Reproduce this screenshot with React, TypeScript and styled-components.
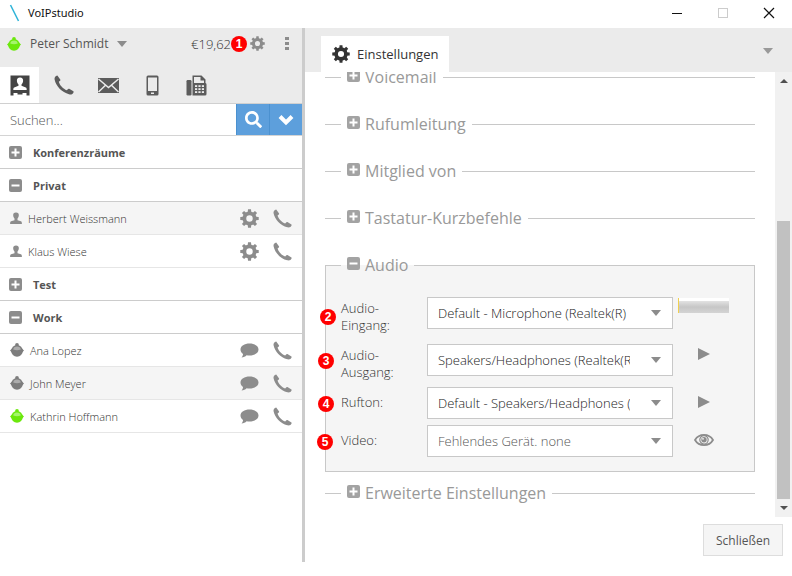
import React from "react";
import styled, { createGlobalStyle, css } from "styled-components";
import { FaSearch } from "react-icons/fa";

const GlobalStyle = createGlobalStyle`
  *, *::before, *::after { box-sizing: border-box; }
  body {
    margin: 0;
    background: #fff;
    color: #555;
    font-family: "Open Sans", "Noto Sans", sans-serif;
    font-size: 13px;
  }
  button, input, select { font: inherit; color: inherit; }
  svg { display: block; flex: none; }
`;

/* ---------- icons ---------- */

type IconProps = { size?: number };

const Gear = ({ size = 18 }: IconProps) => (
  <svg width={size} height={size} viewBox="0 0 20 20" aria-hidden="true">
    <circle cx="10" cy="10" r="5.4" fill="none" stroke="currentColor" strokeWidth="4" />
    {[0, 45, 90, 135, 180, 225, 270, 315].map((a) => (
      <path key={a} d="M8.1 4 L8.4 0.3 H11.6 L11.9 4Z" fill="currentColor" transform={`rotate(${a} 10 10)`} />
    ))}
  </svg>
);

const Phone = ({ size = 18 }: IconProps) => (
  <svg width={size} height={size} viewBox="0 0 20 20" aria-hidden="true">
    <path
      fill="currentColor"
      d="M3.4 0.6 L6.4 4.8 Q6.6 5.4 6.1 5.8 L4.8 6.8 C5.8 10.4 9.2 13.9 12.8 15.3 L14.1 14 Q14.6 13.5 15.2 13.8 L19.4 16.2 Q19.8 16.6 19.6 17.2 C18.8 19.2 17.2 19.8 15 19.3 C8 17.6 1.8 11.2 0.6 4.6 C0.3 2.6 1.2 1.2 3.4 0.6Z"
    />
  </svg>
);

const Contacts = () => (
  <svg width="20" height="21" viewBox="0 0 20 21" aria-hidden="true">
    <path fill="currentColor" d="M0.5 0.5h19v20h-3v-2.5h-4v1.5h-5V18h-4v2.5h-3z" />
    <path
      fill="#fff"
      d="M10 2.6c2.2 0 3.3 1.5 3.1 3.5-.1 1.5-.8 2.5-1.6 3.3v1.4l4.3 1.6c.7.3.9.9.9 2.6H3.3c0-1.7.2-2.3.9-2.6l4.3-1.6V9.4c-.8-.8-1.5-1.8-1.6-3.3C6.7 4.1 7.8 2.6 10 2.6z"
    />
  </svg>
);

const Mail = () => (
  <svg width="21" height="15" viewBox="0 0 21 15" aria-hidden="true">
    <rect width="21" height="15" fill="currentColor" />
    <path d="M0.5 1 L10.5 9.5 L20.5 1 M0.5 14 L7.5 7.3 M20.5 14 L13.5 7.3" fill="none" stroke="#ebebeb" strokeWidth="1.5" />
  </svg>
);

const Mobile = () => (
  <svg width="13" height="21" viewBox="0 0 13 21" aria-hidden="true">
    <path
      fill="currentColor"
      fillRule="evenodd"
      d="M2 0.5h9a1.5 1.5 0 0 1 1.5 1.5v17a1.5 1.5 0 0 1-1.5 1.5H2A1.5 1.5 0 0 1 .5 19V2A1.5 1.5 0 0 1 2 .5zM2 2.5v13.5h9V2.5zM5 17.5v1.5h3v-1.5z"
    />
  </svg>
);

const Fax = () => (
  <svg width="21" height="21" viewBox="0 0 21 21" aria-hidden="true">
    <rect x="0.5" y="5" width="5" height="15.5" rx="1.2" fill="currentColor" />
    <path
      fill="currentColor"
      fillRule="evenodd"
      d="M6.5 0.5h9l4 4V8q1 .3 1 1.5v9.5q0 1.500-1.500 1.500H6.500zM8 2v6h10V5.500h-3.500V2z"
    />
    <g fill="#ebebeb">
      {[10.2, 13.2, 16.2].map((y) => [9, 12.4, 15.8].map((x) => <rect key={`${x}-${y}`} x={x} y={y} width="2.2" height="1.8" />))}
    </g>
  </svg>
);

const Person = () => (
  <svg width="12" height="13" viewBox="0 0 12 13" aria-hidden="true">
    <path
      fill="currentColor"
      d="M6 0.5c2.1 0 3 1.3 2.8 3C8.7 4.8 8.1 5.9 7.5 6.6v1.6l3.4 1.1c.7.3 1 .8 1 2.7H.1c0-1.9.3-2.4 1-2.7l3.4-1.1V6.6C3.900 5.900 3.300 4.800 3.200 3.500 3 1.800 3.900.5 6 .5z"
    />
  </svg>
);

const Bubble = () => (
  <svg width="19" height="15" viewBox="0 0 19 15" aria-hidden="true">
    <path fill="currentColor" d="M9.5 0.5c5 0 9 2.5 9 6s-4 6-9 6c-1 0-2-.1-2.9-.3C5.3 13.5 3.6 14.3 1.5 14.5 2.5 13.5 3 12.3 3 11 1.4 9.9.5 8.3.5 6.5c0-3.5 4-6 9-6z" />
  </svg>
);

const Status = ({ online }: { online?: boolean }) => {
  const base = online ? "#6be80c" : "#7d7d7d";
  const light = online ? "#a4f56c" : "#adadad";
  return (
    <svg width="14" height="14" viewBox="0 0 14 14" aria-hidden="true">
      <circle cx="7" cy="1.900" r="1.900" fill={base} />
      <circle cx="7" cy="7.900" r="5.800" fill={base} />
      <path d="M0 7.600L3 4.800V10.400zM14 7.600L11 4.800V10.400z" fill={base} />
      <path d="M3.200 6.600Q3.600 3.600 7 3.600T10.800 6.600Q7 8 3.200 6.600Z" fill={light} />
    </svg>
  );
};

const Toggle = ({ open }: { open?: boolean }) => (
  <svg width="13" height="13" viewBox="0 0 13 13" aria-hidden="true">
    <rect width="13" height="13" rx="2" fill="currentColor" />
    <path d={open ? "M2.5 6.5h8" : "M2.5 6.5h8M6.5 2.5v8"} stroke="#fff" strokeWidth="2" />
  </svg>
);

const Caret = () => (
  <svg width="10" height="6" viewBox="0 0 10 6" aria-hidden="true">
    <path d="M0 0h10L5 6z" fill="currentColor" />
  </svg>
);

const Chevron = () => (
  <svg width="16" height="12" viewBox="0 0 16 12" aria-hidden="true">
    <path d="M2 2.5L8 8.5L14 2.5" fill="none" stroke="currentColor" strokeWidth="4" />
  </svg>
);

const Play = () => (
  <svg width="12" height="12" viewBox="0 0 12 12" aria-hidden="true">
    <path d="M0 0L12 6L0 12z" fill="currentColor" />
  </svg>
);

const Eye = () => (
  <svg width="20" height="12" viewBox="0 0 20 12" aria-hidden="true">
    <path d="M1 6C5-.8 15-.8 19 6 15 12.8 5 12.8 1 6z" fill="none" stroke="currentColor" strokeWidth="1.8" />
    <circle cx="10" cy="5.8" r="4.2" fill="none" stroke="currentColor" strokeWidth="1.2" />
    <circle cx="10" cy="5.8" r="2.7" fill="currentColor" />
    <circle cx="9" cy="4.8" r="0.9" fill="#f5f5f5" />
  </svg>
);

const ArrowGlyph = () => (
  <svg width="8" height="4" viewBox="0 0 8 4" aria-hidden="true">
    <path d="M0 0h8L4 4z" fill="currentColor" />
  </svg>
);

/* ---------- window ---------- */

const Window = styled.div`
  display: flex;
  flex-direction: column;
  height: 100vh;
  padding-bottom: 14px;
`;

const TitleBar = styled.header`
  display: flex;
  align-items: center;
  height: 28px;
  padding: 0 17px 3px 9px;
  color: #111;
  font-family: "Noto Sans", sans-serif;
  font-size: 11px;
`;

const Title = styled.h1`
  flex: 1;
  margin: 0 0 0 8px;
  font: inherit;
`;

const WindowButtons = styled.div`
  display: flex;
  gap: 34px;
`;

const PlainButton = styled.button`
  display: inline-flex;
  align-items: center;
  justify-content: center;
  padding: 0;
  border: 0;
  background: none;
  cursor: pointer;
`;

const Body = styled.div`
  flex: 1;
  display: grid;
  grid-template-columns: 305px minmax(0, 1fr);
  min-height: 0;
`;

/* ---------- sidebar ---------- */

const Sidebar = styled.aside`
  border-right: 3px solid #ccc;
`;

const SidebarHead = styled.div`
  background: #ebebeb;
  border-bottom: 1px solid #d0d0d0;
`;

const UserBar = styled.div`
  display: flex;
  align-items: center;
  height: 39px;
  padding: 0 9px 8px 7px;
  font-size: 12px;
  color: #8c8c8c;
`;

const UserButton = styled(PlainButton)`
  gap: 9px;
  margin-right: auto;
`;

const UserText = styled.span`
  color: #555;
`;

const Balance = styled.span`
  color: #333;
  font-size: 13px;
  font-weight: 300;
`;

const SettingsButton = styled(PlainButton)`
  position: relative;
  width: 34px;
  padding-left: 18px;
`;

const Badge = styled.span<{ $left: number; $top: number }>`
  position: absolute;
  left: ${(p) => p.$left}px;
  top: ${(p) => p.$top}px;
  width: 16px;
  height: 16px;
  border-radius: 50%;
  background: #f00;
  color: #fff;
  font: bold 12px/16px "Liberation Sans", Arial, sans-serif;
  text-align: center;
`;

const MoreButton = styled(PlainButton)`
  width: 12px;
  margin-left: 16px;
`;

const Tabs = styled.nav`
  display: flex;
  height: 36px;
`;

const IconTab = styled(PlainButton)<{ $active?: boolean }>`
  width: ${(p) => (p.$active ? 39 : 44)}px;
  color: ${(p) => (p.$active ? "#444" : "#5c5c5c")};
  ${(p) =>
    p.$active &&
    css`
      margin-right: 3px;
      background: #fff;
    `}
`;

const Search = styled.form`
  display: flex;
  height: 31px;
`;

const SearchInput = styled.input`
  flex: 1;
  min-width: 0;
  padding: 0 10px;
  border: 0;
  outline: 0;
  font-size: 13px;
  font-weight: 300;
  &::placeholder { color: #555; opacity: 1; }
`;

const SearchButton = styled(PlainButton)`
  width: 33px;
  background: #5d9fdc;
  color: #fff;
  border-left: 1px solid #4b91d0;
`;

const Groups = styled.div`
  border-top: 1px solid #d4d4d4;
`;

const GroupHead = styled.h2`
  margin: 0;
  border-bottom: 1px solid #ccc;
  font-size: 11px;
  font-weight: 700;
`;

const GroupButton = styled(PlainButton)`
  justify-content: flex-start;
  gap: 11px;
  width: 100%;
  height: 32px;
  padding-left: 9px;
  color: #8c8c8c;
`;

const GroupName = styled.span`
  color: #555;
`;

const ContactList = styled.ul`
  margin: 0;
  padding: 0;
  list-style: none;
`;

const Contact = styled.li<{ $shaded?: boolean }>`
  display: flex;
  align-items: center;
  gap: 14px;
  height: 33px;
  padding: 0 10px;
  border-bottom: 1px solid #e6e6e6;
  background: ${(p) => (p.$shaded ? "#f5f5f5" : "#fff")};
  color: #8c8c8c;
`;

const ContactLabel = styled.span`
  display: flex;
  align-items: center;
  gap: 6px;
  flex: 1;
`;

const ContactName = styled.span`
  color: #333;
  font-size: 11px;
  font-weight: 300;
`;

/* ---------- settings panel ---------- */

const Panel = styled.main`
  display: flex;
  flex-direction: column;
  min-height: 0;
`;

const TabBar = styled.div`
  display: flex;
  align-items: flex-end;
  justify-content: space-between;
  height: 44px;
  padding: 0 19px 0 16px;
  background: #ebebeb;
  color: #999;
`;

const PanelTab = styled(PlainButton)`
  gap: 7px;
  height: 36px;
  padding: 0 11px;
  background: #fff;
  color: #333;
  font-size: 13px;
`;

const TabMenu = styled(PlainButton)`
  height: 42px;
`;

const ScrollArea = styled.div`
  flex: 1;
  display: flex;
  min-height: 0;
`;

const Content = styled.div`
  flex: 1;
  min-width: 0;
  overflow: hidden;
  padding: 0 20px;
`;

const Sections = styled.div`
  display: flex;
  flex-direction: column;
  gap: 23px;
  margin-top: -7px;
`;

const Fieldset = styled.fieldset<{ $open?: boolean }>`
  min-width: 0;
  margin: 0;
  padding: 0;
  border: 1px solid #c8c8c8;
  ${(p) =>
    p.$open
      ? css`
          margin-bottom: -14px;
          padding: 20px 15px 14px;
          background: #f5f5f5;
        `
      : css`
          border-width: 1px 0 0;
        `}
`;

const Legend = styled.legend<{ $open?: boolean }>`
  margin-left: ${(p) => (p.$open ? 0 : 16)}px;
  padding: 0 6px;
  color: #999;
  font-size: 16px;
  line-height: 24px;
`;

const LegendButton = styled(PlainButton)`
  display: flex;
  gap: 5px;
  height: 24px;
  svg { margin-bottom: 4px; color: #a3a3a3; }
`;

const Fields = styled.div`
  display: flex;
  flex-direction: column;
  gap: 6px;
`;

const Field = styled.div<{ $roomy?: boolean }>`
  position: relative;
  display: grid;
  grid-template-columns: 86px minmax(0, 246px) 61px;
  align-items: start;
  ${(p) => p.$roomy && css`min-height: 41px;`}
`;

const FieldLabel = styled.label<{ $single?: boolean }>`
  width: 60px;
  padding-top: ${(p) => (p.$single ? 7 : 3)}px;
  color: #333;
  font-size: 13px;
  font-weight: 300;
  line-height: 17px;
`;

const SelectBox = styled.div`
  display: grid;
  align-items: center;
  color: #8c8c8c;
  > * { grid-area: 1 / 1; }
  > svg { justify-self: end; margin-right: 12px; pointer-events: none; }
`;

const Select = styled.select<{ $muted?: boolean }>`
  appearance: none;
  width: 100%;
  height: 32px;
  padding: 0 42px 0 10px;
  border: 1px solid #c8c8c8;
  border-radius: 0;
  background: #fff;
  color: ${(p) => (p.$muted ? "#555" : "#222")};
  font-size: 13px;
  font-weight: 300;
`;

const Meter = styled.div`
  width: 51px;
  height: 15px;
  margin: 1px 0 0 5px;
  border-left: 1px solid #f0d050;
  background: linear-gradient(#fff 0 3px, #e2e2e2 3px, #c6c6c6 9px, #d4d4d4);
`;

const FieldAction = styled(PlainButton)<{ $tall?: boolean }>`
  width: 61px;
  height: ${(p) => (p.$tall ? 30 : 20)}px;
  color: #8c8c8c;
`;

const ScrollBar = styled.div`
  display: flex;
  flex-direction: column;
  align-items: center;
  width: 17px;
  background: #f1f1f1;
  color: #505050;
`;

const ScrollArrow = styled(PlainButton)<{ $up?: boolean }>`
  width: 17px;
  height: 18px;
  ${(p) => p.$up && css`svg { transform: rotate(180deg); }`}
`;

const Track = styled.div`
  flex: 1;
  display: flex;
  flex-direction: column;
  justify-content: flex-end;
`;

const Thumb = styled.div`
  width: 13px;
  height: 68%;
  background: #c1c1c1;
`;

const Footer = styled.footer`
  display: flex;
  justify-content: flex-end;
  padding: 7px 9px 6px;
`;

const CloseButton = styled.button`
  height: 32px;
  padding: 0 12px;
  border: 1px solid #ddd;
  background: #f5f5f5;
  font-size: 12px;
  cursor: pointer;
`;

/* ---------- parts ---------- */

const Group = ({ name, open, children }: { name: string; open?: boolean; children?: React.ReactNode }) => (
  <section>
    <GroupHead>
      <GroupButton type="button" aria-expanded={!!open}>
        <Toggle open={open} />
        <GroupName>{name}</GroupName>
      </GroupButton>
    </GroupHead>
    {open && <ContactList>{children}</ContactList>}
  </section>
);

type ContactRowProps = { name: string; kind: "person" | "offline" | "online"; shaded?: boolean };

const ContactRow = ({ name, kind, shaded }: ContactRowProps) => (
  <Contact $shaded={shaded}>
    <ContactLabel>
      {kind === "person" ? <Person /> : <Status online={kind === "online"} />}
      <ContactName>{name}</ContactName>
    </ContactLabel>
    <PlainButton type="button" aria-label={kind === "person" ? "Bearbeiten" : "Chat"}>
      {kind === "person" ? <Gear size={19} /> : <Bubble />}
    </PlainButton>
    <PlainButton type="button" aria-label="Anrufen">
      <Phone size={19} />
    </PlainButton>
  </Contact>
);

const Section = ({ title, open, children }: { title: string; open?: boolean; children?: React.ReactNode }) => (
  <Fieldset $open={open}>
    <Legend $open={open}>
      <LegendButton type="button" aria-expanded={!!open}>
        <Toggle open={open} />
        {title}
      </LegendButton>
    </Legend>
    {children}
  </Fieldset>
);

type DeviceFieldProps = {
  id: string;
  label: string;
  value: string;
  badge: number;
  badgeLeft: number;
  badgeTop: number;
  single?: boolean;
  muted?: boolean;
  roomy?: boolean;
  children: React.ReactNode;
};

const DeviceField = ({ id, label, value, badge, badgeLeft, badgeTop, single, muted, roomy, children }: DeviceFieldProps) => (
  <Field $roomy={roomy}>
    <Badge $left={badgeLeft} $top={badgeTop}>{badge}</Badge>
    <FieldLabel htmlFor={id} $single={single}>{label}</FieldLabel>
    <SelectBox>
      <Select id={id} $muted={muted}>
        <option>{value}</option>
      </Select>
      <Caret />
    </SelectBox>
    {children}
  </Field>
);

export default function App() {
  return (
    <>
      <GlobalStyle />
      <Window>
        <TitleBar>
          <svg width="11" height="18" viewBox="0 0 11 18" aria-hidden="true">
            <path d="M1.5 1L9.5 17" stroke="#2fb4d8" strokeWidth="1.6" />
          </svg>
          <Title>VoIPstudio</Title>
          <WindowButtons>
            <PlainButton type="button" aria-label="Minimieren">
              <svg width="12" height="12" viewBox="0 0 12 12"><path d="M1 6.5h10" stroke="#111" /></svg>
            </PlainButton>
            <PlainButton type="button" aria-label="Maximieren">
              <svg width="12" height="12" viewBox="0 0 12 12"><rect x="1.5" y="1.5" width="9" height="9" fill="none" stroke="#ccc" /></svg>
            </PlainButton>
            <PlainButton type="button" aria-label="Fenster schließen">
              <svg width="12" height="12" viewBox="0 0 12 12"><path d="M1 1l10 10M11 1L1 11" stroke="#111" strokeWidth="1.2" /></svg>
            </PlainButton>
          </WindowButtons>
        </TitleBar>

        <Body>
          <Sidebar>
            <SidebarHead>
              <UserBar>
                <UserButton type="button">
                  <Status online />
                  <UserText>Peter Schmidt</UserText>
                  <Caret />
                </UserButton>
                <Balance>€19,62</Balance>
                <SettingsButton type="button" aria-label="Einstellungen">
                  <Badge $left={0} $top={0}>1</Badge>
                  <Gear size={15} />
                </SettingsButton>
                <MoreButton type="button" aria-label="Mehr">
                  <svg width="4" height="13" viewBox="0 0 4 13">
                    <path d="M0 0h4v3H0zM0 5h4v3H0zM0 10h4v3H0z" fill="currentColor" />
                  </svg>
                </MoreButton>
              </UserBar>
              <Tabs>
                <IconTab type="button" $active aria-label="Kontakte"><Contacts /></IconTab>
                <IconTab type="button" aria-label="Anrufe"><Phone size={20} /></IconTab>
                <IconTab type="button" aria-label="Nachrichten"><Mail /></IconTab>
                <IconTab type="button" aria-label="SMS"><Mobile /></IconTab>
                <IconTab type="button" aria-label="Fax"><Fax /></IconTab>
              </Tabs>
            </SidebarHead>
            <Search>
              <SearchInput type="text" placeholder="Suchen..." aria-label="Suchen" />
              <SearchButton type="submit" aria-label="Suche starten"><FaSearch size={17} /></SearchButton>
              <SearchButton type="button" aria-label="Optionen"><Chevron /></SearchButton>
            </Search>
            <Groups>
              <Group name="Konferenzräume" />
              <Group name="Privat" open>
                <ContactRow name="Herbert Weissmann" kind="person" shaded />
                <ContactRow name="Klaus Wiese" kind="person" />
              </Group>
              <Group name="Test" />
              <Group name="Work" open>
                <ContactRow name="Ana Lopez" kind="offline" />
                <ContactRow name="John Meyer" kind="offline" shaded />
                <ContactRow name="Kathrin Hoffmann" kind="online" />
              </Group>
            </Groups>
          </Sidebar>

          <Panel>
            <TabBar>
              <PanelTab type="button">
                <Gear size={18} />
                Einstellungen
              </PanelTab>
              <TabMenu type="button" aria-label="Tabs"><Caret /></TabMenu>
            </TabBar>
            <ScrollArea>
              <Content>
                <Sections>
                  <Section title="Voicemail" />
                  <Section title="Rufumleitung" />
                  <Section title="Mitglied von" />
                  <Section title="Tastatur-Kurzbefehle" />
                  <Section title="Audio" open>
                    <Fields>
                      <DeviceField id="mic" label="Audio-Eingang:" value="Default - Microphone (Realtek(R)" badge={2} badgeLeft={-21} badgeTop={12} roomy>
                        <Meter />
                      </DeviceField>
                      <DeviceField id="out" label="Audio-Ausgang:" value="Speakers/Headphones (Realtek(R) Audio)" badge={3} badgeLeft={-23} badgeTop={9}>
                        <FieldAction type="button" aria-label="Ausgang testen"><Play /></FieldAction>
                      </DeviceField>
                      <DeviceField id="ring" label="Rufton:" value="Default - Speakers/Headphones (Realtek(R) Audio)" badge={4} badgeLeft={-23} badgeTop={9} single>
                        <FieldAction type="button" aria-label="Rufton testen" $tall><Play /></FieldAction>
                      </DeviceField>
                      <DeviceField id="video" label="Video:" value="Fehlendes Gerät. none" badge={5} badgeLeft={-24} badgeTop={9} single muted>
                        <FieldAction type="button" aria-label="Video testen" $tall><Eye /></FieldAction>
                      </DeviceField>
                    </Fields>
                  </Section>
                  <Section title="Erweiterte Einstellungen" />
                </Sections>
              </Content>
              <ScrollBar>
                <ScrollArrow type="button" aria-label="Nach oben" $up><ArrowGlyph /></ScrollArrow>
                <Track><Thumb /></Track>
                <ScrollArrow type="button" aria-label="Nach unten"><ArrowGlyph /></ScrollArrow>
              </ScrollBar>
            </ScrollArea>
            <Footer>
              <CloseButton type="button">Schließen</CloseButton>
            </Footer>
          </Panel>
        </Body>
      </Window>
    </>
  );
}
